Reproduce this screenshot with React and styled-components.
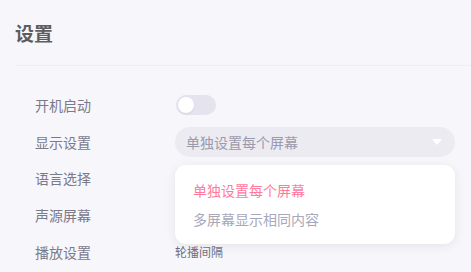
import React, { useState } from "react";
import styled, { createGlobalStyle } from "styled-components";

const GlobalStyle = createGlobalStyle`
  html, body {
    margin: 0;
    padding: 0;
    background: #f7f6fa;
    font-family: "Noto Sans CJK SC", "Noto Sans", sans-serif;
  }
`;

const Page = styled.div`
  width: 471px;
  height: 272px;
  overflow: hidden;
  padding-left: 15px;
  box-sizing: border-box;
`;

const Header = styled.div`
  height: 66px;
  display: flex;
  align-items: center;
  border-bottom: 1px solid #efeef3;
  box-sizing: border-box;
  padding-bottom: 1px;
`;

const Title = styled.h1`
  margin: 0;
  font-size: 19px;
  line-height: 1;
  font-weight: 700;
  color: #5c5c62;
`;

const List = styled.div`
  padding: 21px 16px 0 20px;
  display: flex;
  flex-direction: column;
`;

const Row = styled.div`
  height: 36.6px;
  display: flex;
  align-items: center;
  position: relative;
`;

const Label = styled.div`
  width: 140px;
  flex-shrink: 0;
  font-size: 14px;
  color: #7b7a8a;
`;

const Track = styled.div`
  width: 40px;
  height: 20px;
  border-radius: 10px;
  background: ${({ $on }) => ($on ? "#ff7a9c" : "#e4e3ee")};
  display: flex;
  align-items: center;
  justify-content: ${({ $on }) => ($on ? "flex-end" : "flex-start")};
  padding: 0 2px;
  box-sizing: border-box;
  margin-left: 1px;
  cursor: pointer;
`;

const Knob = styled.div`
  width: 16px;
  height: 16px;
  border-radius: 50%;
  background: #ffffff;
  box-shadow: 0 1px 2px rgba(120, 120, 150, 0.15);
`;

const Select = styled.div`
  flex: 1;
  height: 30px;
  border-radius: 15px;
  background: #ecebf2;
  display: flex;
  align-items: center;
  justify-content: space-between;
  padding: 0 11px 0 11px;
  box-sizing: border-box;
  font-size: 14px;
  color: #9b9aad;
  cursor: pointer;
`;

const Caret = styled.span`
  width: 0;
  height: 0;
  border-left: 5px solid transparent;
  border-right: 5px solid transparent;
  border-top: 6px solid #ffffff;
  margin-right: 2px;
`;

const Menu = styled.div`
  position: absolute;
  top: 41px;
  left: 140px;
  right: 0;
  background: #ffffff;
  border-radius: 11px;
  box-shadow: 0 2px 10px rgba(120, 118, 150, 0.14);
  padding: 11px 0 10px;
  z-index: 10;
`;

const Option = styled.div`
  height: 29px;
  display: flex;
  align-items: center;
  padding-left: 18px;
  font-size: 14px;
  color: ${({ $active }) => ($active ? "#ff7a9c" : "#a9a8ba")};
  cursor: pointer;
`;

const SubLabel = styled.div`
  font-size: 12px;
  color: #6f6e7e;
`;

const options = ["单独设置每个屏幕", "多屏幕显示相同内容"];

export default function App() {
  const [autoStart, setAutoStart] = useState(false);
  const [mode, setMode] = useState(0);

  return (
    <Page>
      <GlobalStyle />
      <Header>
        <Title>设置</Title>
      </Header>
      <List>
        <Row>
          <Label>开机启动</Label>
          <Track $on={autoStart} onClick={() => setAutoStart(!autoStart)}>
            <Knob />
          </Track>
        </Row>
        <Row>
          <Label>显示设置</Label>
          <Select>
            <span>{options[mode]}</span>
            <Caret />
          </Select>
          <Menu>
            {options.map((o, i) => (
              <Option key={o} $active={i === mode} onClick={() => setMode(i)}>
                {o}
              </Option>
            ))}
          </Menu>
        </Row>
        <Row>
          <Label>语言选择</Label>
        </Row>
        <Row>
          <Label>声源屏幕</Label>
        </Row>
        <Row>
          <Label>播放设置</Label>
          <SubLabel>轮播间隔</SubLabel>
        </Row>
      </List>
    </Page>
  );
}
